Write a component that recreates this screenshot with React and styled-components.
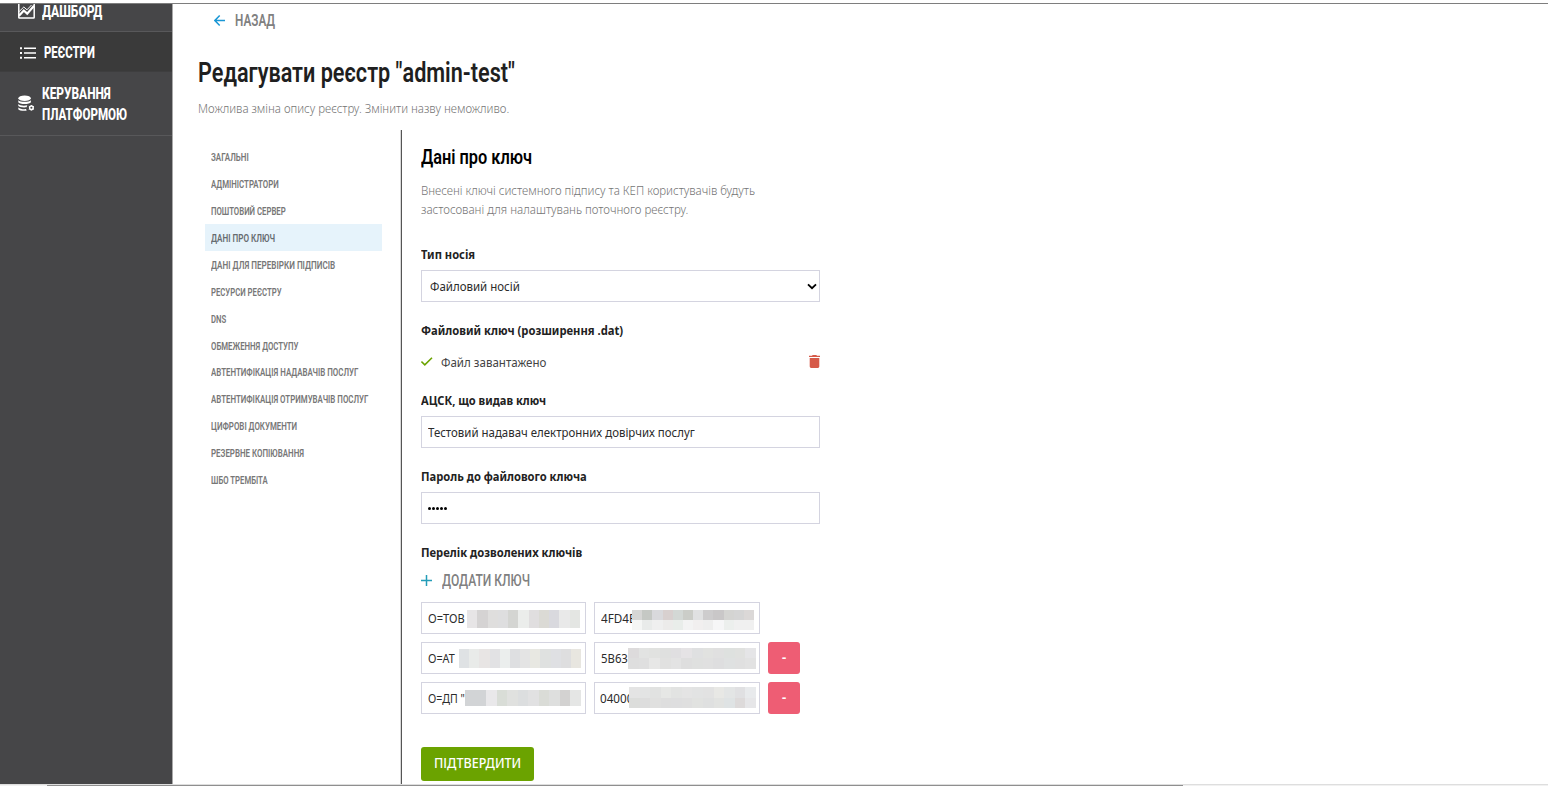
import React, { useLayoutEffect, useRef, useState } from "react";
import styled, { createGlobalStyle } from "styled-components";

const display = `Roboto, "Liberation Sans", sans-serif`;
const body = `"Noto Sans", "Open Sans", sans-serif`;

const GlobalStyle = createGlobalStyle`
  * { box-sizing: border-box; }
  body { margin: 0; background: #fff; font-family: ${body}; font-size: 12px; color: #2b2b2b; overflow: hidden; }
`;

/* Text condensed or widened to an exact run length */
const FitBox = styled.span`
  display: block;
  flex: none;
  width: ${(p) => p.$w}px;
  white-space: nowrap;
`;
const FitText = styled.span`
  display: inline-block;
  transform-origin: 0 50%;
`;
function Fit({ w, children }) {
  const ref = useRef(null);
  const [scale, setScale] = useState(1);
  useLayoutEffect(() => {
    setScale(w / ref.current.offsetWidth);
  }, [w, children]);
  return (
    <FitBox $w={w}>
      <FitText ref={ref} style={{ transform: `scaleX(${scale})` }}>{children}</FitText>
    </FitBox>
  );
}

const Page = styled.div`
  width: 1548px;
  height: 787px;
  padding-top: 3px;
  display: flex;
  flex-direction: column;
`;
const Frame = styled.div`
  display: flex;
  height: 781px;
  border-top: 1px solid #7e7e7e;
`;
const ScrollTrack = styled.div`
  height: 2px;
  border-top: 1px solid #dedede;
  background: #f1f1f1;
  padding-left: 47px;
`;
const ScrollThumb = styled.div`
  width: 1136px;
  height: 1px;
  background: #8f8f8f;
`;

const Sidebar = styled.aside`
  width: 173px;
  flex: none;
  background: #464648;
  border-right: 1px solid #a9a9a9;
  color: #fff;
  font: 800 16.5px/21px ${display};
`;
const SideItem = styled.div`
  display: flex;
  align-items: center;
  height: ${(p) => p.$h}px;
  padding: ${(p) => p.$pad};
  gap: ${(p) => p.$gap}px;
  background: ${(p) => (p.$active ? "#3a3a3a" : "transparent")};
  border-bottom: 1px solid ${(p) => (p.$active ? "#3e3e3f" : "#58585a")};
  svg { flex: none; display: block; }
`;

const Main = styled.main`
  flex: 1;
  padding-left: 25px;
`;
const Back = styled.div`
  display: flex;
  align-items: center;
  height: 32px;
  padding-left: 16px;
  gap: 10px;
  color: #808080;
  font: 600 17px/24px ${display};
`;
const Title = styled.h1`
  margin: 16px 0 0;
  color: #1f1f1f;
  font: 600 28px/41px ${display};
`;
const Lead = styled.div`
  margin-top: 6px;
  height: 31px;
  line-height: 19px;
  font-weight: 300;
  color: #747474;
`;
const Columns = styled.div`
  display: flex;
  height: 654px;
`;
const Nav = styled.nav`
  width: 204px;
  padding: 13.5px 19.5px 0 6.5px;
  border-right: 1px solid #555;
  box-shadow: inset -1px 0 0 #d8d8d8;
`;
const NavItem = styled.div`
  display: flex;
  align-items: center;
  height: 26.92px;
  padding: 0.5px 0 0 6px;
  background: ${(p) => (p.$active ? "#e6f3fb" : "transparent")};
  color: ${(p) => (p.$active ? "#666c70" : "#777")};
  font: 600 11.5px/16px ${display};
`;

const Form = styled.section`
  width: 418px;
  padding: 14.5px 0 0 19px;
`;
const Heading = styled.h2`
  margin: 0;
  color: #000;
  font: 600 20px/24px ${display};
`;
const Hint = styled.div`
  margin: 12px 0 24px;
  font-weight: 300;
  line-height: 19.6px;
  color: #747474;
`;
const Group = styled.div`
  height: ${(p) => p.$h || 76}px;
`;
const Label = styled.div`
  height: 26px;
  line-height: 22px;
  font-weight: 700;
  color: #222;
`;
const Field = styled.div`
  display: flex;
  align-items: center;
  justify-content: ${(p) => (p.$split ? "space-between" : "flex-start")};
  width: ${(p) => p.$w || 399}px;
  height: 32px;
  padding: ${(p) => p.$top || 0}px 2px 0 ${(p) => p.$left || 6}px;
  border: 1px solid #d4d4e0;
  background: #fff;
`;
const Dots = styled.div`
  display: flex;
  gap: 1px;
  padding-top: 2px;
`;
const Dot = styled.i`
  width: 3px;
  height: 3px;
  border-radius: 50%;
  background: #000;
`;
const FileRow = styled.div`
  display: flex;
  align-items: center;
  height: 24px;
  margin-top: 4px;
  gap: 7.5px;
  color: #444;
  span { padding-top: 0.5px; }
  svg:last-child { margin-left: auto; }
`;
const AddKey = styled.div`
  display: flex;
  align-items: center;
  height: 25px;
  gap: 10px;
  color: #808080;
  font: 500 17px/23px ${display};
  svg { margin-top: 1px; }
`;
const KeyRows = styled.div`
  display: flex;
  flex-direction: column;
  gap: 8px;
  margin: 9px 0 33px;
`;
const KeyRow = styled.div`
  display: flex;
  gap: 8px;
`;
const Visible = styled.div`
  flex: none;
  width: ${(p) => p.$w}px;
  padding-top: 2px;
`;
const Mosaic = styled.div`
  display: grid;
  flex: none;
  position: relative;
  z-index: 1;
  grid-template-columns: repeat(${(p) => p.$cols}, 1fr);
  width: ${(p) => p.$w}px;
  height: ${(p) => p.$h}px;
  margin-top: ${(p) => p.$top || 0}px;
`;
const Cell = styled.i`
  background: ${(p) => p.$c};
`;
const Remove = styled.button`
  width: 32px;
  height: 32px;
  padding: 0 0 2px;
  border: 0;
  border-radius: 3px;
  background: #ee5d74;
  color: #fff;
  font: 700 13px/20px ${body};
`;
const Submit = styled.button`
  display: flex;
  align-items: center;
  height: 34px;
  padding: 0 12.5px 1px;
  border: 0;
  border-radius: 3px;
  background: #6ba300;
  color: #fff;
  font: 500 13.5px/20px ${body};
`;

const nav = [
  ["ЗАГАЛЬНІ", 38],
  ["АДМІНІСТРАТОРИ", 67.5],
  ["ПОШТОВИЙ СЕРВЕР", 75],
  ["ДАНІ ПРО КЛЮЧ", 64],
  ["ДАНІ ДЛЯ ПЕРЕВІРКИ ПІДПИСІВ", 124.5],
  ["РЕСУРСИ РЕЄСТРУ", 70.5],
  ["DNS", 15.5],
  ["ОБМЕЖЕННЯ ДОСТУПУ", 87.5],
  ["АВТЕНТИФІКАЦІЯ НАДАВАЧІВ ПОСЛУГ", 147.5],
  ["АВТЕНТИФІКАЦІЯ ОТРИМУВАЧІВ ПОСЛУГ", 157.5],
  ["ЦИФРОВІ ДОКУМЕНТИ", 86.5],
  ["РЕЗЕРВНЕ КОПІЮВАННЯ", 93],
  ["ШБО ТРЕМБІТА", 56.5],
];

const keys = [
  {
    a: { text: "O=ТОВ", tw: 37, vis: 39, w: 113, h: 18, top: 2, cols: 11,
      cells: "#e7e5e6 #d5d3d3 #dfdedd #dededf #d4d5d2 #ebedeb #e0dedf #dbdad5 #d9d9de #e9e9e9 #e4e6e3" },
    b: { text: "4FD4E", tw: 34, vis: 31, w: 122, h: 20, top: 5, cols: 12,
      cells: "#d6d6d5 #c5c8c4 #d9d9dc #d8d0cf #d3d8d5 #cbcdc8 #e0e1e2 #cdcccd #c9c7c8 #d4d4d2 #d5d5d5 #dbd8d7 #f5f6f5 #e9ebea #efefef #ecebea #e9edea #f3f3f3 #f1efef #eeeeee #f6f6f7 #ecefed #f0f0f0 #f0f0f0" },
  },
  {
    a: { text: "O=АТ", tw: 27, vis: 31, w: 122, h: 19, top: 1, cols: 12,
      cells: "#dfe2e4 #e9ebe9 #e8e5e4 #e2e2e4 #ebeeed #dedfe1 #e4e4e4 #e8e8e2 #dfe1e0 #dfe0e3 #dededf #e8e6e0" },
    b: { text: "5B63", tw: 26.5, vis: 27, w: 128, h: 21, top: 1, cols: 12,
      cells: "#dddbdc #e2e3e2 #e1e2e0 #dfe0df #e0dfe1 #e5e3e5 #dfe0e1 #e1e2e0 #e0e0e0 #dee1df #e0e1df #e5e5e7 #dedede #dfdfdf #e7e7e6 #e1e1e0 #e3e3e3 #dedede #dfe0df #e0e0e0 #dededf #dfe1e1 #e0e0e0 #e2e2e2" },
    remove: true,
  },
  {
    a: { text: 'O=ДП "', tw: 37, vis: 37, w: 116, h: 16, cols: 11,
      cells: "#d2d4d6 #d2d4d6 #e9e8ea #d9ddd7 #e0e1df #dcdedf #e1e1e2 #dadcd7 #dedfde #d3d2d1 #e5e6e5" },
    b: { text: "04000", tw: 33, vis: 29, w: 127, h: 21, left: 5, cols: 12,
      cells: "#e4e4e4 #e3e4e4 #e1e2e1 #e6e7e5 #e2e3e2 #e4e4e4 #e2e3e3 #e2e2e2 #e8e8e5 #e3e5e5 #e0e0e2 #e8eaec #dcdddb #dddddd #e0e0df #dedede #dededf #dfdfdf #e1e2e0 #dfe0e0 #e2e3e1 #dfe3e4 #dddada #e6e6e8" },
    remove: true,
  },
];

function MaskedField({ w, data }) {
  return (
    <Field $w={w} $left={data.left}>
      <Visible $w={data.vis}><Fit w={data.tw}>{data.text}</Fit></Visible>
      <Mosaic $w={data.w} $h={data.h} $top={data.top} $cols={data.cols}>
        {data.cells.split(" ").map((c, i) => <Cell key={i} $c={c} />)}
      </Mosaic>
    </Field>
  );
}

const ChartIcon = () => (
  <svg width="17" height="15" viewBox="0 0 17 15" fill="none" stroke="#fff">
    <rect x="0.8" y="-1" width="15.4" height="15" rx="0.6" strokeWidth="1.5" />
    <path d="M1 11.8 5.8 6.500l3.400 3.100L16 1.800" strokeWidth="2.200" />
    <path d="M1.200 7.500 5.800 3l3.200 2.800L13.500 1" strokeWidth="1" />
  </svg>
);
const ListIcon = () => (
  <svg width="16" height="12" viewBox="0 0 16 12" fill="#fff">
    <path d="M0 .2h2v2H0zM4 .5h12V2H4zM0 5h2v2H0zM4 5.3h12v1.5H4zM0 9.8h2v2H0zM4 10.1h12v1.5H4z" />
  </svg>
);
const DatabaseIcon = () => (
  <svg width="17" height="17" viewBox="0 0 17 17" fill="#fff">
    <ellipse cx="6.6" cy="3.2" rx="6.3" ry="2.8" />
    <path d="M.3 5.2c1.6 2.1 11 2.1 12.6 0v2.1c-1 2.4-11.6 2.4-12.6 0z" />
    <path d="M.3 9c1.5 1.7 6 2.1 9 1.2L8.6 12.3C5 12.8 1 12.1.3 10.8z" />
    <path d="M.3 12.4c1.6 1.5 5 2 7.8 1.7l.5 1.6C5 16.2 1 15.5.3 14.2z" />
    <circle cx="13.4" cy="12.8" r="1.8" fill="none" stroke="#fff" strokeWidth="1.5" />
    <path d="M13.4 10v1M13.4 14.6v1M10.8 11.3l.9.5M15.1 13.8l.9.5M10.8 14.3l.9-.5M15.1 11.8l.9-.5" stroke="#fff" strokeWidth="1" />
  </svg>
);

export default function App() {
  return (
    <>
      <GlobalStyle />
      <Page>
        <Frame>
          <Sidebar>
            <SideItem $h={28} $pad="0 0 12px 18px" $gap={7}>
              <ChartIcon /><Fit w={60}>ДАШБОРД</Fit>
            </SideItem>
            <SideItem $h={40} $pad="2px 0 0 20px" $gap={8} $active>
              <ListIcon /><Fit w={51}>РЕЄСТРИ</Fit>
            </SideItem>
            <SideItem $h={64} $pad="0 0 0 18px" $gap={7}>
              <DatabaseIcon />
              <div><Fit w={69}>КЕРУВАННЯ</Fit><Fit w={85}>ПЛАТФОРМОЮ</Fit></div>
            </SideItem>
          </Sidebar>
          <Main>
            <Back>
              <svg width="11" height="11" viewBox="0 0 11 11" fill="none" stroke="#1a97d5" strokeWidth="1.5">
                <path d="M11 5.5H1M5.7.6.9 5.5l4.8 4.9" />
              </svg>
              <Fit w={40}>НАЗАД</Fit>
            </Back>
            <Title><Fit w={317}>Редагувати реєстр "admin-test"</Fit></Title>
            <Lead><Fit w={311}>Можлива зміна опису реєстру. Змінити назву неможливо.</Fit></Lead>
            <Columns>
              <Nav>
                {nav.map(([text, w], i) => (
                  <NavItem key={text} $active={i === 3}><Fit w={w}>{text}</Fit></NavItem>
                ))}
              </Nav>
              <Form>
                <Heading><Fit w={111}>Дані про ключ</Fit></Heading>
                <Hint>
                  <Fit w={334}>Внесені ключі системного підпису та КЕП користувачів будуть</Fit>
                  <Fit w={267}>застосовані для налаштувань поточного реєстру.</Fit>
                </Hint>
                <Group>
                  <Label><Fit w={54}>Тип носія</Fit></Label>
                  <Field $left={8} $top={1.5} $split>
                    <Fit w={90}>Файловий носій</Fit>
                    <svg width="10" height="7" viewBox="0 0 10 7" fill="none" stroke="#000" strokeWidth="1.8">
                      <path d="m1 1.3 4 3.9 4-3.9" />
                    </svg>
                  </Field>
                </Group>
                <Group $h={70}>
                  <Label><Fit w={202}>Файловий ключ (розширення .dat)</Fit></Label>
                  <FileRow>
                    <svg width="12" height="10" viewBox="0 0 12 10" fill="none" stroke="#6ba300" strokeWidth="1.6">
                      <path d="m.4 4.6 3.4 3.3L11 .8" />
                    </svg>
                    <Fit w={105}>Файл завантажено</Fit>
                    <svg width="11" height="13" viewBox="0 0 11 13" fill="#d65a49">
                      <path d="M0 .7h3L3.7 0h3.600L8 .7h3v1.400H0zM.7 3h9.600v8.600A1.400 1.400 0 0 1 8.900 13H2.100A1.400 1.400 0 0 1 .7 11.600z" />
                    </svg>
                  </FileRow>
                </Group>
                <Group>
                  <Label><Fit w={125}>АЦСК, що видав ключ</Fit></Label>
                  <Field $top={1.5}><Fit w={267}>Тестовий надавач електронних довірчих послуг</Fit></Field>
                </Group>
                <Group>
                  <Label><Fit w={166}>Пароль до файлового ключа</Fit></Label>
                  <Field><Dots><Dot /><Dot /><Dot /><Dot /><Dot /></Dots></Field>
                </Group>
                <Label><Fit w={161}>Перелік дозволених ключів</Fit></Label>
                <AddKey>
                  <svg width="11" height="11" viewBox="0 0 11 11" stroke="#249db8" strokeWidth="1.5">
                    <path d="M5.5 0v11M0 5.5h11" />
                  </svg>
                  <Fit w={88}>ДОДАТИ КЛЮЧ</Fit>
                </AddKey>
                <KeyRows>
                  {keys.map((k, i) => (
                    <KeyRow key={i}>
                      <MaskedField w={165} data={k.a} />
                      <MaskedField w={166} data={k.b} />
                      {k.remove && <Remove>-</Remove>}
                    </KeyRow>
                  ))}
                </KeyRows>
                <Submit><Fit w={87.5}>ПІДТВЕРДИТИ</Fit></Submit>
              </Form>
            </Columns>
          </Main>
        </Frame>
        <ScrollTrack><ScrollThumb /></ScrollTrack>
      </Page>
    </>
  );
}
